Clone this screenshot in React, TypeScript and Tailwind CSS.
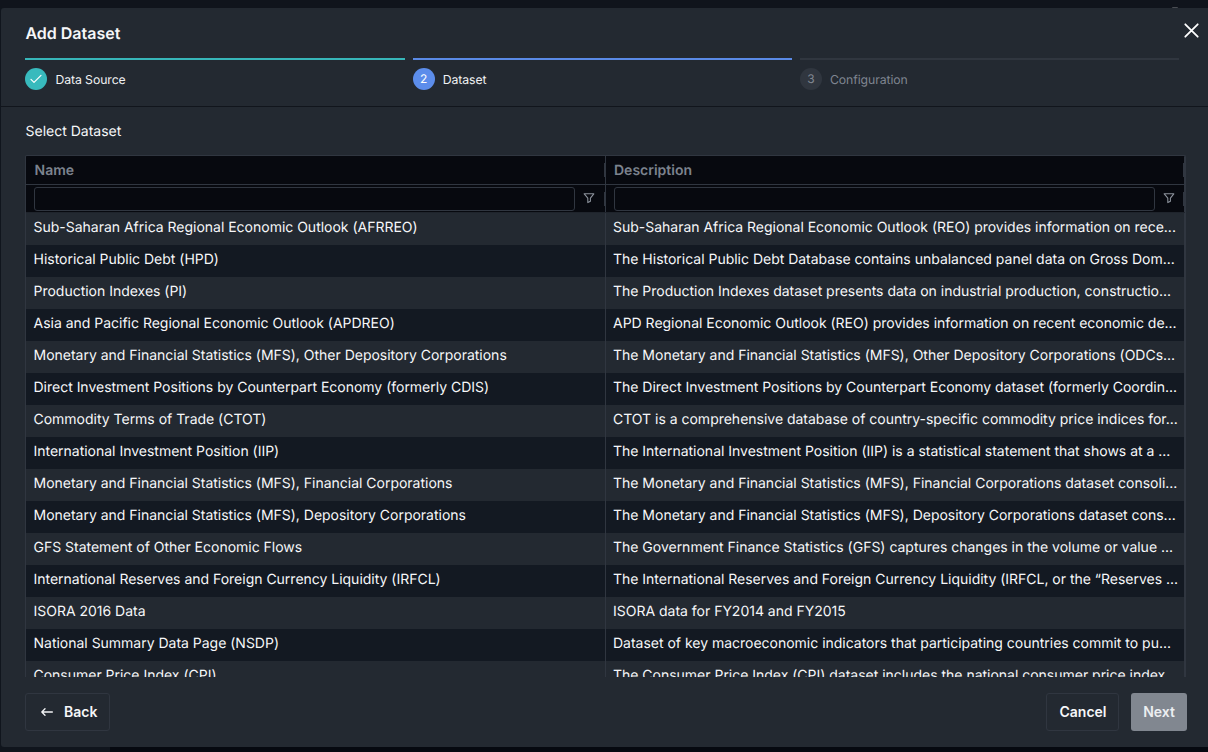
import React from "react";

const rows: [string, string][] = [
  ["Sub-Saharan Africa Regional Economic Outlook (AFRREO)", "Sub-Saharan Africa Regional Economic Outlook (REO) provides information on rece..."],
  ["Historical Public Debt (HPD)", "The Historical Public Debt Database contains unbalanced panel data on Gross Dom..."],
  ["Production Indexes (PI)", "The Production Indexes dataset presents data on industrial production, constructio..."],
  ["Asia and Pacific Regional Economic Outlook (APDREO)", "APD Regional Economic Outlook (REO) provides information on recent economic de..."],
  ["Monetary and Financial Statistics (MFS), Other Depository Corporations", "The Monetary and Financial Statistics (MFS), Other Depository Corporations (ODCs..."],
  ["Direct Investment Positions by Counterpart Economy (formerly CDIS)", "The Direct Investment Positions by Counterpart Economy dataset (formerly Coordin..."],
  ["Commodity Terms of Trade (CTOT)", "CTOT is a comprehensive database of country-specific commodity price indices for..."],
  ["International Investment Position (IIP)", "The International Investment Position (IIP) is a statistical statement that shows at a ..."],
  ["Monetary and Financial Statistics (MFS), Financial Corporations", "The Monetary and Financial Statistics (MFS), Financial Corporations dataset consoli..."],
  ["Monetary and Financial Statistics (MFS), Depository Corporations", "The Monetary and Financial Statistics (MFS), Depository Corporations dataset cons..."],
  ["GFS Statement of Other Economic Flows", "The Government Finance Statistics (GFS) captures changes in the volume or value ..."],
  ["International Reserves and Foreign Currency Liquidity (IRFCL)", "The International Reserves and Foreign Currency Liquidity (IRFCL, or the “Reserves ..."],
  ["ISORA 2016 Data", "ISORA data for FY2014 and FY2015"],
  ["National Summary Data Page (NSDP)", "Dataset of key macroeconomic indicators that participating countries commit to pu..."],
  ["Consumer Price Index (CPI)", "The Consumer Price Index (CPI) dataset includes the national consumer price index"],
];

function FilterIcon() {
  return (
    <svg width="12" height="12" viewBox="0 0 12 12" fill="none" stroke="#8b919b" strokeWidth="1.1" strokeLinejoin="round" className="-mt-0.5">
      <path d="M1.2 1.8h9.6L7.4 6.2v3L4.8 10.6V6.2z" />
    </svg>
  );
}

function Step({ bar, circle, label, text, children }: { bar: string; circle: string; label: string; text: string; children: React.ReactNode }) {
  return (
    <div className="w-[379.3px]">
      <div className={`h-0.5 ${bar}`} />
      <div className="mt-2 flex h-[22px] items-center gap-2">
        <div className={`flex size-[22px] items-center justify-center rounded-full text-[12px] ${circle}`}>{children}</div>
        <span className={`mt-px text-[12.25px] leading-[18px] tracking-[-0.08px] ${text}`}>{label}</span>
      </div>
    </div>
  );
}

function HeaderCell({ title }: { title: string }) {
  return (
    <div className="flex w-[579.5px] items-center justify-between border-r border-[#303640] pl-[8.5px]">
      <span className="text-[14px] font-semibold text-[#7c838e]">{title}</span>
      <span className="h-[14px] w-px bg-[#303640]" />
    </div>
  );
}

function FilterCell() {
  return (
    <div className="flex w-[579.5px] items-center border-r border-[#303640] pl-2">
      <div className="h-6 w-[541px] rounded-[3px] border border-[#303640]" />
      <div className="ml-2 flex flex-1 items-center justify-between">
        <FilterIcon />
        <span className="h-[14px] w-px bg-[#303640]" />
      </div>
    </div>
  );
}

export default function App() {
  return (
    <div className="flex h-[752px] w-[1208px] flex-col bg-[linear-gradient(90deg,#10151d_110px,#060910_110px)] pl-px font-['Inter',sans-serif] text-[#f6f7f9] [text-rendering:geometricPrecision]">
      <div className="relative h-2 shrink-0 -ml-px bg-[#10141c]">
        <span className="absolute bottom-0 left-[1172px] h-[1.5px] w-[6px] rounded-t-full bg-[#4a4d53]" />
      </div>
      <main className="flex h-[739px] flex-col rounded-l-[3px] bg-[#232931]">
        <header className="relative h-[99px] shrink-0 border-b border-[#11151c] pl-[24.4px] pt-4">
          <h1 className="h-[18px] text-[16px] leading-[19px] font-semibold">Add Dataset</h1>
          <svg className="absolute left-[1183px] top-[15px]" width="15" height="15" viewBox="0 0 15 15" stroke="#fff" strokeWidth="1.8" strokeLinecap="round">
            <path d="M1.3 1.3 13.7 13.7M13.7 1.3 1.3 13.7" />
          </svg>
          <div className="mt-4 flex gap-2">
            <Step bar="bg-[#37b6b9]" circle="bg-[#38babd]" label="Data Source" text="text-[#f0f1f3]">
              <svg width="12" height="10" viewBox="0 0 12 10" fill="none" stroke="#fff" strokeWidth="1.2" strokeLinecap="round" strokeLinejoin="round">
                <path d="m1 5.4 3 3L11 1.4" />
              </svg>
            </Step>
            <Step bar="bg-[#5a8ae6]" circle="bg-[#5c8deb] text-white" label="Dataset" text="text-[#f0f1f3]">2</Step>
            <Step bar="bg-[#30363f]" circle="bg-[#30363f] text-[#7f8590]" label="Configuration" text="text-[#7f8590]">3</Step>
          </div>
        </header>
        <section className="flex flex-col pl-6">
          <h2 className="mt-4 pl-[0.5px] text-[14px] leading-[18px]">Select Dataset</h2>
          <div className="mt-[14px] flex h-[522px] w-[1161px] flex-col overflow-hidden rounded-t-[2px] border border-b-0 border-[#303640]">
            <div className="flex h-7 shrink-0 bg-[#07090f]">
              <HeaderCell title="Name" />
              <HeaderCell title="Description" />
            </div>
            <div className="flex h-[29px] shrink-0 border-y border-t-[#303640] border-b-[#1f242c] bg-[#07090f]">
              <FilterCell />
              <FilterCell />
            </div>
            {rows.map(([name, description]) => (
              <div key={name} className="flex h-8 shrink-0 tracking-[-0.012px] odd:bg-[#232931] even:bg-[#131922]">
                <div className="w-[579.5px] overflow-hidden border-r border-[#303640] pl-[7.5px] text-[14px] leading-[29px] whitespace-nowrap">{name}</div>
                <div className="w-[579.5px] overflow-hidden border-r border-[#303640] pl-[7.5px] text-[14px] leading-[29px] whitespace-nowrap">{description}</div>
              </div>
            ))}
          </div>
          <footer className="mt-4 flex w-[1162px] items-center text-[14px] font-semibold">
            <button className="flex h-[38px] w-[85px] items-center rounded-[3px] border border-[#303640] pl-[15px]">
              <svg width="12" height="10" viewBox="0 0 12 10" fill="none" stroke="#f3f4f6" strokeWidth="1.3" strokeLinecap="round" strokeLinejoin="round">
                <path d="M11.4 5H.8M4 1.8.8 5 4 8.2" />
              </svg>
              <span className="-mt-0.5 ml-[11px]">Back</span>
            </button>
            <button className="ml-auto h-[38px] w-[73px] rounded-[3px] border border-[#303640] pb-0.5 pl-px">Cancel</button>
            <button className="ml-3 h-[38px] w-14 rounded-[3px] bg-[#818790] pb-0.5 text-[#eceef1]">Next</button>
          </footer>
        </section>
      </main>
    </div>
  );
}
